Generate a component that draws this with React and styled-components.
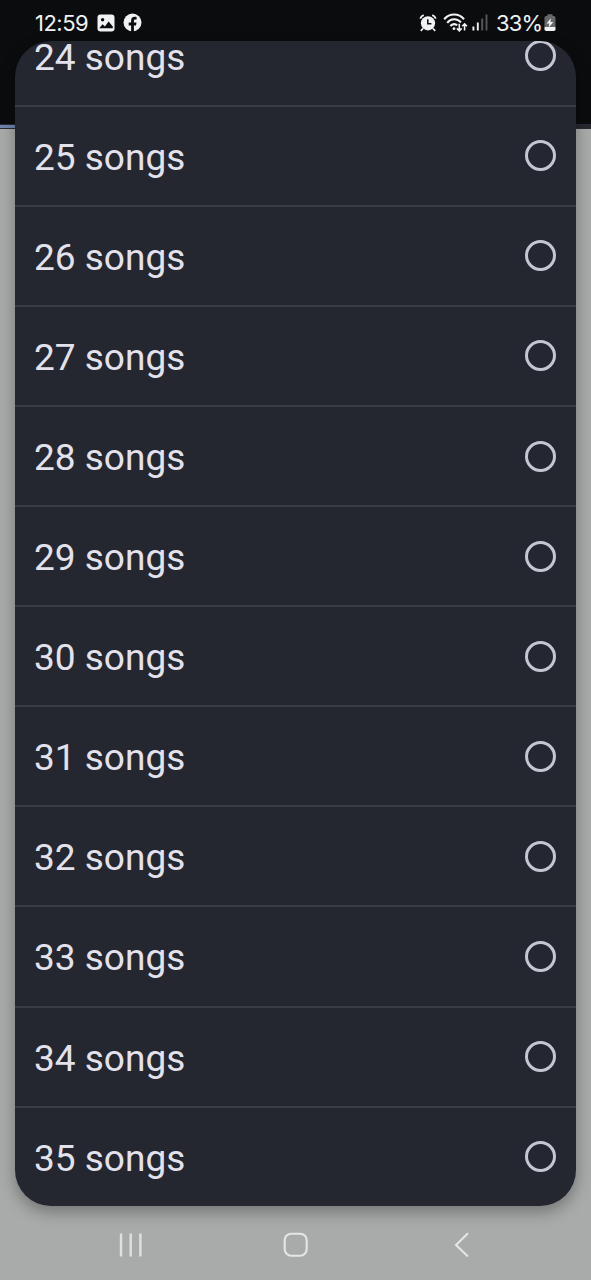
import React from "react"
import styled, { createGlobalStyle } from "styled-components"

const options = [24, 25, 26, 27, 28, 29, 30, 31, 32, 33, 34, 35]

const App = () => {
  return (
    <Screen>
      <GlobalStyle />
      <Backdrop>
        <BackdropHeader />
        <BackdropLine />
      </Backdrop>
      <Overlay>
        <StatusBar>
          <Time>12:59</Time>
          <PictureIcon />
          <FacebookIcon />
          <Spacer />
          <AlarmIcon />
          <WifiIcon />
          <SignalIcon />
          <Percent>33%</Percent>
          <BatteryIcon />
        </StatusBar>
        <Dialog>
          <List>
            {options.map((count) => (
              <Row key={count}>
                <Label>{count} songs</Label>
                <Radio />
              </Row>
            ))}
          </List>
        </Dialog>
        <NavBar>
          <svg width="24" height="24" viewBox="0 0 24 24">
            <path d="M2 0.5v23M11.7 0.5v23M21.4 0.5v23" stroke="#dfe1e0" strokeWidth="2.4" />
          </svg>
          <HomeButton width="26" height="26" viewBox="0 0 26 26">
            <rect x="1.7" y="1.7" width="22" height="22" rx="6.5" fill="none" stroke="#e4e6e5" strokeWidth="2.1" />
          </HomeButton>
          <svg width="16" height="26" viewBox="0 0 16 26">
            <path d="M14 1.2L2 13l12 11.5" fill="none" stroke="#e4e6e5" strokeWidth="2.1" />
          </svg>
        </NavBar>
      </Overlay>
    </Screen>
  )
}

export default App

const PictureIcon = () => (
  <Icon width="18" height="18" viewBox="0 0 18 18" $left={9}>
    <rect x="0.5" y="0.5" width="17" height="17" rx="3" fill="#f1f2f3" />
    <circle cx="5.6" cy="5.8" r="1.7" fill="#0b0c0e" />
    <path d="M2.2 14.2l3.4-4 2.3 2.2 3.7-5 4.2 5v1.8z" fill="#0b0c0e" />
  </Icon>
)

const FacebookIcon = () => (
  <Icon width="19" height="19" viewBox="0 0 19 19" $left={7.5}>
    <circle cx="9.5" cy="9.5" r="9" fill="#f1f2f3" />
    <path
      d="M8.1 19v-6.6H5.7V9.6h2.4V7.8c0-2.7 1.3-4 3.6-4 .8 0 1.4.1 1.9.2v2.4h-1.3c-1.1 0-1.4.5-1.4 1.5v1.7h2.6l-.5 2.8h-2.1V19z"
      fill="#0b0c0e"
    />
  </Icon>
)

const AlarmIcon = () => (
  <Icon width="18" height="18" viewBox="0 0 18 18">
    <path
      d="M1.2 4.6Q2.2 2 4.8 1.2M16.8 4.6Q15.8 2 13.2 1.2M4 14.5l-2.2 2.3M14 14.5l2.2 2.3"
      fill="none"
      stroke="#f1f2f3"
      strokeWidth="1.8"
    />
    <circle cx="9" cy="9.3" r="7.1" fill="#f1f2f3" />
    <path d="M8.8 5.2v4.6h3.6" fill="none" stroke="#0b0c0e" strokeWidth="1.5" />
  </Icon>
)

const WifiIcon = () => (
  <Icon width="25" height="20" viewBox="0 0 25 20" $left={6}>
    <g fill="none" stroke="#f1f2f3" strokeWidth="2.1">
      <path d="M1.2 6.2C6.5-.1 15.7-.1 21 6.2" />
      <path d="M4.2 9.8C8 5.1 14.2 5.1 18 9.4" />
      <path d="M7.4 13c2-2.4 5.1-2.4 6.8-.6" />
      <path d="M16.3 10.8v6.4M13.9 15.4l2.4 2.4 2.4-2.4M21.6 17.4v-6M19.2 13.3l2.4-2.4 2.4 2.4" strokeWidth="1.6" />
    </g>
    <circle cx="11" cy="15.7" r="1.4" fill="#f1f2f3" />
  </Icon>
)

const SignalIcon = () => (
  <Icon width="16" height="17" viewBox="0 0 16 17" $left={4}>
    <path d="M1.4 12.4v4M5.8 8.6v7.8" stroke="#f1f2f3" strokeWidth="1.9" />
    <path d="M10.2 4.5v11.9M14.5 0.5v15.9" stroke="#55575a" strokeWidth="1.9" />
  </Icon>
)

const BatteryIcon = () => (
  <Icon width="12" height="18" viewBox="0 0 12 18" $left={3}>
    <path d="M3.3 2V1.2Q3.3.3 4.2.3h3.6q.9 0 .9.9V2h1q1.8 0 1.8 1.8V13H.5V3.8Q.5 2 2.3 2z" fill="#66686a" />
    <path d="M.5 13h11v2.2q0 1.8-1.8 1.8H2.3Q.5 17 .5 15.2z" fill="#f1f2f3" />
    <path d="M6.8 4.2L2.6 9.5h2.7l-.6 4 4.7-5.6H6.5z" fill="#f1f2f3" />
  </Icon>
)

const GlobalStyle = createGlobalStyle`
  * {
    box-sizing: border-box;
  }
  body {
    margin: 0;
    background: #a7a9a8;
  }
`

const Screen = styled.main`
  position: relative;
  width: 591px;
  height: 1280px;
  overflow: hidden;
  background: #a9abaa;
  font-family: Roboto, sans-serif;
`

const Backdrop = styled.div`
  position: absolute;
  inset: 0;
`

const BackdropHeader = styled.div`
  height: 124px;
  background: #0b0c0e;
`

const BackdropLine = styled.div`
  height: 5px;
  border-top: 1px solid #252b39;
  border-bottom: 1px solid #292c34;
  background: linear-gradient(90deg, #6f84ad 50%, #26282e 50%);
`

const Overlay = styled.div`
  position: relative;
  display: flex;
  flex-direction: column;
  height: 100%;
`

const StatusBar = styled.header`
  display: flex;
  align-items: center;
  flex: 0 0 41px;
  padding: 4px 35px 0 35px;
  color: #f1f2f3;
`

const Time = styled.span`
  font-family: Inter, sans-serif;
  font-size: 22px;
  letter-spacing: -0.5px;
  line-height: 26px;
  width: 53px;
  white-space: nowrap;
`

const Percent = styled(Time)`
  width: 45px;
  margin-left: 8px;
  letter-spacing: -0.9px;
`

const Spacer = styled.div`
  flex: 1;
`

const Icon = styled.svg`
  flex: none;
  margin-left: ${({ $left }) => $left || 0}px;
`

const Dialog = styled.section`
  display: flex;
  flex-direction: column;
  justify-content: flex-end;
  flex: 0 0 1165px;
  margin: 0 15px;
  overflow: hidden;
  border-radius: 36px;
  background: #242630;
  box-shadow: 0 6px 16px rgba(0, 0, 0, 0.32);
`

const List = styled.ul`
  flex: none;
  margin: 0;
  padding: 0;
  list-style: none;
`

const Row = styled.li`
  display: flex;
  align-items: center;
  justify-content: space-between;
  height: 100.1px;
  padding: 0 20px 0 19px;
  border-bottom: 2px solid #393b45;

  &:last-child {
    height: 98.4px;
    border-bottom: 0;
  }
`

const Label = styled.span`
  padding-top: 4px;
  font-size: 37px;
  line-height: 44px;
  color: #e3e2ec;
`

const Radio = styled.span`
  width: 31px;
  height: 31px;
  border: 3px solid #c5c6d3;
  border-radius: 50%;
`

const NavBar = styled.nav`
  display: flex;
  align-items: center;
  justify-content: space-between;
  flex: 1;
  padding: 3px 121px 0 119px;
`

const HomeButton = styled.svg`
  margin-right: 5px;
`
